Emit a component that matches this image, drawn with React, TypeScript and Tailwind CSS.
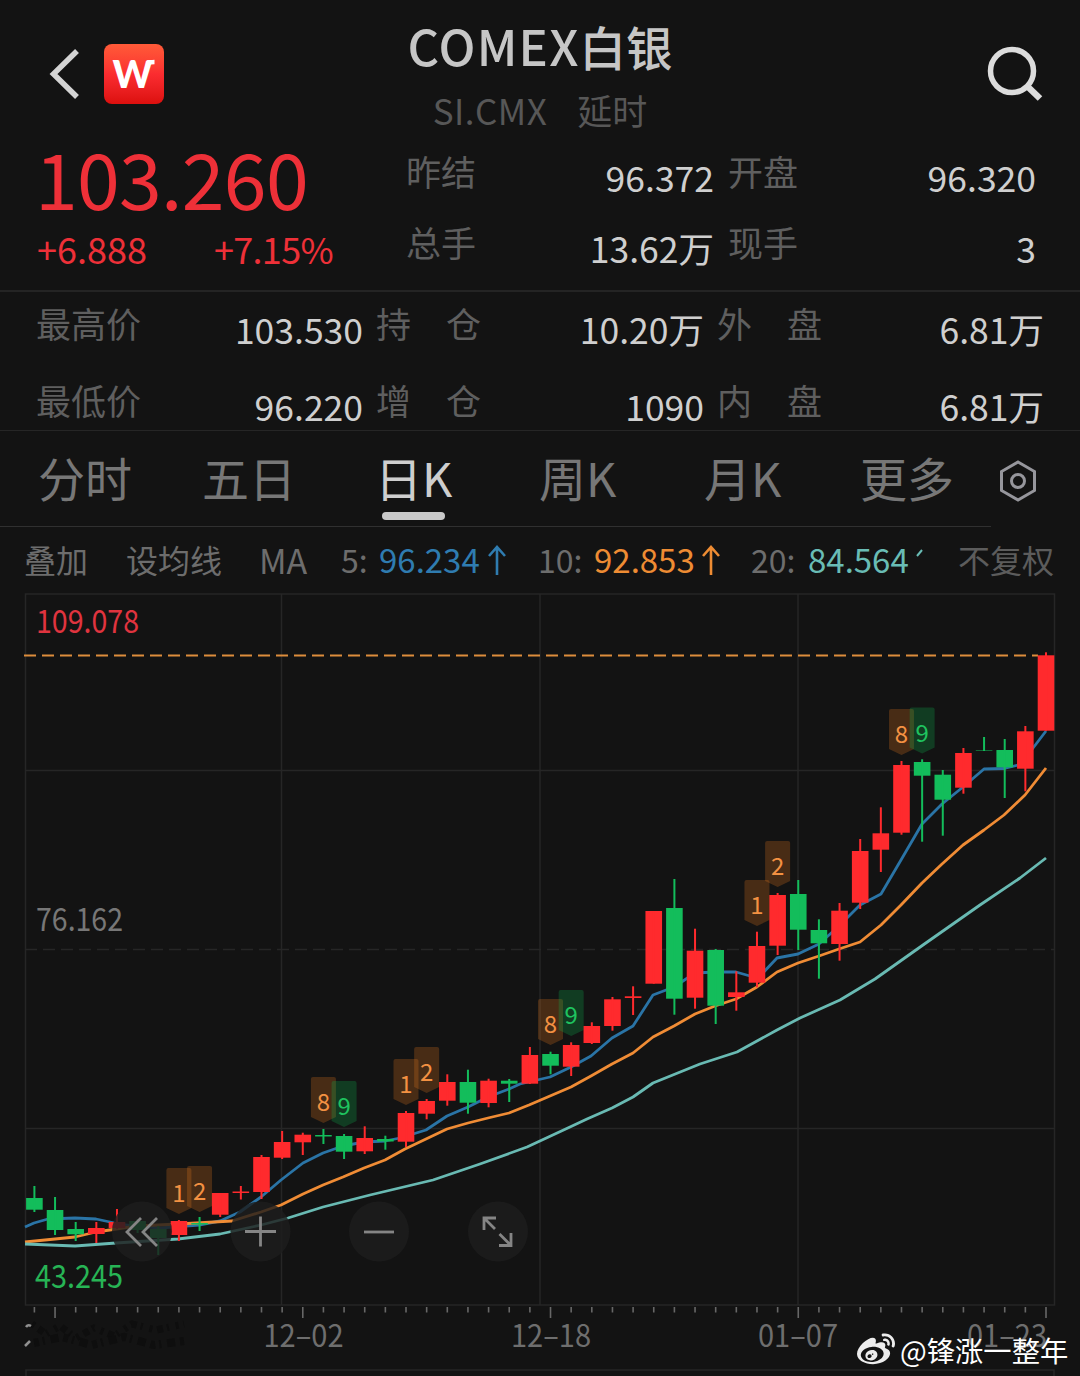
import { FaWeibo } from "react-icons/fa"

const RED = "#ff2a2d"
const GREEN = "#13bd5b"

// [up, body top, body bottom, high, low]
const candles: [boolean, number, number, number, number][] = [
  [false, 1198, 1209.7, 1186, 1212],
  [false, 1210, 1230, 1197, 1235],
  [false, 1229, 1234.3, 1222, 1241],
  [true, 1228, 1234, 1222, 1243],
  [true, 1222, 1228, 1209, 1229],
  [false, 1221, 1230, 1219, 1233],
  [false, 1229, 1238, 1226, 1255],
  [true, 1221, 1235, 1220, 1241],
  [false, 1223, 1224.5, 1217, 1231],
  [true, 1193, 1214.7, 1193, 1217],
  [true, 1191.5, 1193, 1186, 1199.5],
  [true, 1157, 1192, 1155, 1199],
  [true, 1142, 1157.7, 1131, 1159],
  [true, 1134.7, 1142.3, 1132.7, 1155],
  [false, 1135, 1136.5, 1129, 1144],
  [false, 1136, 1151.7, 1134, 1159],
  [true, 1138, 1151.3, 1126.3, 1154],
  [false, 1139, 1141.5, 1135.7, 1149.7],
  [true, 1113, 1141.7, 1111, 1147],
  [true, 1101, 1113.7, 1099, 1119.3],
  [true, 1082, 1100.7, 1074.3, 1105.7],
  [false, 1082, 1102.7, 1069.7, 1113.7],
  [true, 1080.7, 1103, 1078.7, 1107.3],
  [false, 1080.7, 1083.7, 1079, 1102],
  [true, 1055, 1083.7, 1047, 1084],
  [false, 1054, 1065.7, 1051.7, 1074.3],
  [true, 1045, 1066.7, 1042.3, 1076],
  [true, 1026, 1043, 1022.3, 1044],
  [true, 999.3, 1026, 997, 1030.7],
  [true, 996.3, 998, 986.3, 1015],
  [true, 911, 983.7, 911, 983.7],
  [false, 908, 998.7, 879, 1014.7],
  [true, 950.7, 997.7, 928.7, 1008.7],
  [false, 950, 1005.7, 949, 1024],
  [true, 992.3, 997, 971.3, 1010.7],
  [true, 946, 982.7, 931.7, 987.3],
  [true, 895, 945.7, 893, 955],
  [false, 894, 929.7, 880, 950],
  [false, 930, 943.3, 919.3, 978.7],
  [true, 910.7, 944, 903, 960.7],
  [true, 851, 902.7, 839, 909],
  [true, 833.3, 849.7, 807.3, 872],
  [true, 765, 832.7, 761, 834.7],
  [false, 762, 775.7, 759.3, 841.7],
  [false, 774.7, 799.7, 770, 835.7],
  [true, 753, 787.7, 748, 793.7],
  [false, 750.4, 750.9, 737, 751],
  [false, 750, 767.3, 739, 798],
  [true, 731.3, 768.7, 726, 791.3],
  [true, 655.3, 730.7, 652.3, 730.7],
]

const ma5 =
  "25,1227 34,1223 48,1219 75,1218 96,1219 110,1222 125,1225 160,1228 199,1225 220,1221 240,1212 261,1197 281,1180 303,1163 323,1153 343,1146 364,1142 385,1141 400,1138 426,1130 447,1116 468,1107 488,1097 509,1089 520,1084 550,1077 571,1067 591,1056 612,1038 633,1026 653,995 674,987 695,973 715,972 736,972 750,976 760,976 777,958 798,954 819,944 839,926 860,905 881,894 901,860 922,824 942,804 963,787 984,769 1004,768.5 1018,765 1030,752 1046,731"
const ma10 =
  "25,1242 75,1237 96,1232 137,1226 178,1224 232,1221 261,1212 281,1205 303,1194 323,1185 343,1177 364,1168 385,1160 405,1149 426,1139 447,1129 468,1123 488,1118 509,1113 529,1105 550,1096 571,1087 591,1076 612,1064 633,1053 653,1037 674,1026 695,1014 715,1006 736,999 757,987 777,972 798,963 819,956 839,949 860,942 881,925 901,905 922,883 942,864 963,845 984,830 1004,815 1025,795 1046,768"
const ma20 =
  "25,1244 75,1246 116,1243 178,1239 220,1234 261,1225 288,1218 323,1207 370,1195 433,1180 480,1164 527,1147 570,1127 587,1119 612,1108 633,1097 653,1083 700,1064 737,1052 777,1030 800,1018 840,1000 875,979 923,945 980,905 1020,878 1046,858"

// [candle index, top, label]
const flags: [number, number, string][] = [
  [7, 1168, "1"],
  [8, 1166, "2"],
  [14, 1077, "8"],
  [15, 1081, "9"],
  [18, 1059, "1"],
  [19, 1047, "2"],
  [25, 999, "8"],
  [26, 990, "9"],
  [35, 880, "1"],
  [36, 841, "2"],
  [42, 709, "8"],
  [43, 707.5, "9"],
]

const dates = [
  { x: 303.5, label: "12–02" },
  { x: 551, label: "12–18" },
  { x: 798, label: "01–07" },
  { x: 1007, label: "01–23" },
]

const tabs = [
  { label: "分时", width: "w-[164px]" },
  { label: "五日", width: "w-[173px]" },
  { label: "日K", width: "w-[164px]", active: true },
  { label: "周K", width: "w-[165px]" },
  { label: "月K", width: "w-[156px]" },
  { label: "更多", width: "w-[139px]" },
]

const candleX = (i: number) => 34.4 + 20.645 * i

function Stat({ label, value, className }: { label: string; value: string; className: string }) {
  return (
    <div className={`flex justify-between whitespace-nowrap ${className}`}>
      <span className="whitespace-pre text-[35px] leading-[62px] text-[#5f5f5f]">{label}</span>
      <span className="text-[35.5px] leading-[74px] text-[#cfcfcf]">{value}</span>
    </div>
  )
}

function Arrow({ className }: { className: string }) {
  return (
    <svg viewBox="0 0 20 32" className={`h-8 w-5 shrink-0 ${className}`} fill="none" stroke="currentColor" strokeWidth="2.6">
      <path d="M10 31V3M2 12l8-9 8 9" />
    </svg>
  )
}

function Header() {
  return (
    <header className="flex h-[140px] justify-between">
      <div className="flex h-[148px] w-[380px] items-center pl-[48px]">
        <svg viewBox="0 0 32 52" className="h-[52px] w-8" fill="none" stroke="#d4d4d4" strokeWidth="5.5">
          <path d="M29 3L5.500 26l23.500 23" />
        </svg>
        <div className="ml-6 h-[60px] w-[60px] rounded-lg bg-linear-to-b from-[#ff5a38] via-[#fb2c30] to-[#dc0f0d]">
          <svg viewBox="0 0 60 60" className="h-full w-full">
            <text x="28.500" y="43.500" textAnchor="middle" fontSize="38" fontWeight="900" fontFamily="Lato, sans-serif" fill="#ffffff">
              W
            </text>
            <path d="M43.500 19.200q2-1.200 7-1.200" stroke="#ffffff" strokeWidth="4.500" fill="none" />
          </svg>
        </div>
      </div>
      <div className="flex flex-col items-center whitespace-nowrap">
        <h1 className="mt-[12px] h-[68px] text-[46.5px] leading-[66px] font-medium text-[#c6c6c6]">
          <span className="text-[49px] tracking-[1.2px]">COMEX</span>白银
        </h1>
        <p className="flex gap-[30px] text-[35px] leading-[60px] text-[#575757]">
          <span className="tracking-[0.5px]">SI.CMX</span>
          <span>延时</span>
        </p>
      </div>
      <div className="flex h-[148px] w-[380px] items-center justify-end pr-[37px]">
        <svg viewBox="0 0 56 56" className="h-14 w-14" fill="none" stroke="#dcdcdc" strokeWidth="5.5">
          <circle cx="25" cy="25" r="21.500" />
          <path d="M40 40l13 12.500" strokeWidth="6.500" />
        </svg>
      </div>
    </header>
  )
}

function Quote() {
  return (
    <section className="flex h-[152px] border-b-2 border-[#242424] whitespace-nowrap">
      <div className="w-[406px] pl-[36px] text-[#ee3038]">
        <div className="-ml-px h-[76px] text-[77px] leading-[74px] tracking-[-0.7px]">103.260</div>
        <div className="flex text-[36px] leading-[64px]">
          <span className="w-[178px] pl-px">+6.888</span>
          <span className="tracking-[-0.7px]">+7.15%</span>
        </div>
      </div>
      <div className="w-[308px]">
        <Stat label="昨结" value="96.372" className="h-[71px]" />
        <Stat label="总手" value="13.62万" className="h-[71px]" />
      </div>
      <div className="ml-[14px] w-[308px]">
        <Stat label="开盘" value="96.320" className="h-[71px]" />
        <Stat label="现手" value="3" className="h-[71px]" />
      </div>
    </section>
  )
}

function Depth() {
  return (
    <section className="grid h-[139px] grid-cols-[327px_328px_327px] grid-rows-[77px_62px] gap-x-[13px] border-b border-[#262626] pl-[36px]">
      <Stat label="最高价" value="103.530" className="h-[77px]" />
      <Stat label={"持　仓"} value="10.20万" className="h-[77px]" />
      <Stat label={"外　盘"} value="6.81万" className="h-[77px]" />
      <Stat label="最低价" value="96.220" className="h-[62px]" />
      <Stat label={"增　仓"} value="1090" className="h-[62px]" />
      <Stat label={"内　盘"} value="6.81万" className="h-[62px]" />
    </section>
  )
}

function Tabs() {
  return (
    <nav className="flex h-[95px] pl-[38px]">
      {tabs.map((tab) => (
        <div key={tab.label} className={`${tab.width} shrink-0 text-[47px]`}>
          <div className={`h-[81px] leading-[91px] ${tab.active ? "text-[#cecece]" : "text-[#777777]"}`}>{tab.label}</div>
          {tab.active && <div className="ml-[7px] h-2 w-[63px] rounded-full bg-[#c9c9c9]" />}
        </div>
      ))}
      <svg viewBox="0 0 40 44" className="mt-7 h-11 w-10" fill="none" stroke="#96969c" strokeWidth="3">
        <path d="M19 3l16.500 9.500v19L19 41 2.500 31.500v-19z" />
        <circle cx="19" cy="22" r="6.500" />
      </svg>
    </nav>
  )
}

function Averages() {
  return (
    <div className="flex h-[66px] pl-6 text-[32px] leading-[65px] whitespace-nowrap text-[#6d6d6d]">
      <span className="w-[102px]">叠加</span>
      <span className="w-[133px]">设均线</span>
      <span className="w-[82px] text-[34px]">MA</span>
      <span className="w-[38px]">5:</span>
      <span className="w-[108px] text-[33px] text-[#2f7cb0]">96.234</span>
      <Arrow className="mt-[17px] mr-[31px] text-[#2f7cb0]" />
      <span className="w-[56px]">10:</span>
      <span className="w-[107px] text-[33px] text-[#ee8c33]">92.853</span>
      <Arrow className="mt-[17px] mr-[30px] text-[#ee8c33]" />
      <span className="w-[57px]">20:</span>
      <span className="w-[108px] text-[33px] text-[#69bcb5]">84.564</span>
      <svg viewBox="0 0 8 10" className="mt-[21px] h-[10px] w-2" fill="none" stroke="#69bcb5" strokeWidth="2">
        <path d="M1 8l5-6" />
      </svg>
      <span className="ml-[34px] text-[#5c5c5c]">不复权</span>
    </div>
  )
}

function Chart() {
  return (
    <svg viewBox="0 593 1080 783" className="block h-[783px] w-[1080px]" fontFamily="'Noto Sans CJK SC', sans-serif">
      <g stroke="#262626" strokeWidth="1.500" fill="none">
        <rect x="25.500" y="594" width="1029" height="711" />
        <path d="M281.500 594V1305M540 594V1305M798 594V1305M25 770.500H1055M25 1128.500H1055" />
        <path d="M25 949.500H1055" strokeDasharray="12 6" />
        <path d="M26 1376V1370H1054V1376" />
      </g>
      <path d="M24 655.500H1038" stroke="#dd8d3c" strokeWidth="2.200" strokeDasharray="12 6" />

      <g fill="none" strokeWidth="2.800" strokeLinejoin="round">
        <polyline points={ma5} stroke="#2a74a6" />
        <polyline points={ma10} stroke="#f08c35" />
        <polyline points={ma20} stroke="#69bab3" />
      </g>

      {candles.map(([up, top, bottom, high, low], i) => (
        <g key={i} fill={up ? RED : GREEN}>
          <rect x={candleX(i) - 8.3} y={top} width="16.600" height={bottom - top} />
          <rect x={candleX(i) - 1} y={high} width="2" height={low - high} />
        </g>
      ))}

      {flags.map(([i, top, label]) => {
        const x = candleX(i)
        const color = label === "9" ? "#0fae4e" : "#d9711f"
        return (
          <g key={i}>
            <path
              d={`M${x - 12.5} ${top + 2}q0-2 2-2h21q2 0 2 2v38l-12.500 6l-12.500-6z`}
              fill={color}
              fillOpacity="0.270"
            />
            <text x={x} y={top + 34} textAnchor="middle" fontSize="24" fill={label === "9" ? "#1fc35f" : "#f39142"}>
              {label}
            </text>
          </g>
        )
      })}

      <g fontSize="32.500">
        <text x="36" y="632.500" textLength="103" lengthAdjust="spacingAndGlyphs" fill="#e0343f">109.078</text>
        <text x="36" y="930.500" textLength="87" lengthAdjust="spacingAndGlyphs" fill="#777777">76.162</text>
        <text x="35" y="1288" textLength="88" lengthAdjust="spacingAndGlyphs" fill="#27b455">43.245</text>
      </g>

      {/* Zoom and pan controls */}
      <g fill="#1d1d1d" fillOpacity="0.820">
        <circle cx="142" cy="1231.500" r="30" />
        <circle cx="260.500" cy="1231.500" r="30" />
        <circle cx="379" cy="1231.500" r="30" />
        <circle cx="498" cy="1231.500" r="30" />
      </g>
      <g fill="none" stroke="#858585" strokeWidth="2.800">
        <path d="M141 1218l-14 14 14 14M157 1218l-14 14 14 14" />
        <path d="M245 1231.500h31M260.500 1216.500v30" />
        <path d="M364 1232h30" />
        <path d="M484 1230v-12h12M484 1218l11 11M511 1233v12.500h-12M511 1245.500l-11.500-11.500" />
      </g>

      {/* Time axis */}
      <g stroke="#676767" strokeWidth="1.600">
        {candles.map((_, i) => (
          <line key={i} x1={candleX(i)} x2={candleX(i)} y1="1307" y2={i % 12 === 1 ? 1318 : 1312.5} />
        ))}
      </g>
      {dates.map((d) => (
        <text
          key={d.label}
          x={d.x - 40}
          y="1346.500"
          fontSize="31"
          textLength="80"
          lengthAdjust="spacingAndGlyphs"
          fill="#6e6e6e"
        >
          {d.label}
        </text>
      ))}
      <g stroke="#0e0e0e" fill="none">
        <path d="M32 1324l14 10 14-8 16 12 18-10 20 8 18-12 24 6 28-6" strokeWidth="7" strokeDasharray="3 5 6 4 2 7" />
        <path d="M34 1343l28-6 30 8 32-8 30 8 30-4" strokeWidth="8" strokeDasharray="5 4 2 6 8 5" />
      </g>
      <path d="M26 1327q2-3 5-1M25 1346l5-5" stroke="#909090" strokeWidth="2.500" fill="none" />
    </svg>
  )
}

export default function App() {
  return (
    <div className="relative h-[1376px] w-[1080px] overflow-hidden bg-[#131313] font-['Noto_Sans_CJK_SC',sans-serif]">
      <Header />
      <Quote />
      <Depth />
      <Tabs />
      <div className="h-px w-[991px] bg-[#303030]" />
      <Averages />
      <Chart />
      <div className="absolute top-[1331px] left-[856px] flex items-center text-white">
        <FaWeibo className="h-[38px] w-[40px] text-[#ececec]" />
        <span className="ml-[4px] text-[28.3px] leading-[36px] whitespace-nowrap">@锋涨一整年</span>
      </div>
    </div>
  )
}
